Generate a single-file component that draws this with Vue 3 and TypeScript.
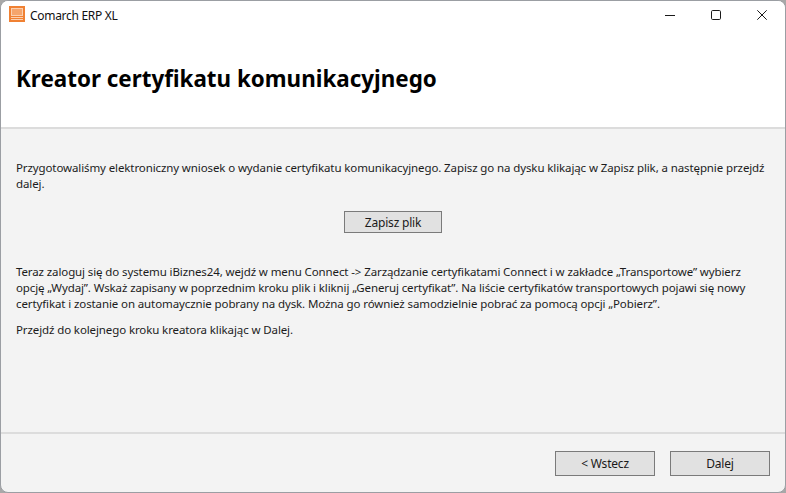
<script setup lang="ts">
const intro: string[] = [
  'Przygotowaliśmy elektroniczny wniosek o wydanie certyfikatu komunikacyjnego. Zapisz go na dysku klikając w Zapisz plik, a następnie przejdź',
  'dalej.',
]
const steps: string[] = [
  'Teraz zaloguj się do systemu iBiznes24, wejdź w menu Connect -> Zarządzanie certyfikatami Connect i w zakładce „Transportowe” wybierz',
  'opcję „Wydaj”. Wskaż zapisany w poprzednim kroku plik i kliknij „Generuj certyfikat”. Na liście certyfikatów transportowych pojawi się nowy',
  'certyfikat i zostanie on automaycznie pobrany na dysk. Można go również samodzielnie pobrać za pomocą opcji „Pobierz”.',
]
</script>

<template>
  <div class="window">
    <div class="titlebar">
      <div class="title-left">
        <svg class="app-icon" width="16" height="16" viewBox="0 0 16 16">
          <rect width="16" height="16" fill="#f08133" />
          <rect x="2.5" y="2.5" width="11" height="7" fill="#f5a56c" stroke="#fbd0b0" stroke-width="1" />
          <path d="M2 11.5h12M2 13.5h12" stroke="#fbd0b0" stroke-width="1" />
        </svg>
        <span class="app-title">Comarch ERP XL</span>
      </div>
      <div class="controls">
        <div class="ctl">
          <svg width="10" height="10" viewBox="0 0 10 10"><path d="M0 5.5h10" stroke="#1a1a1a" stroke-width="1" /></svg>
        </div>
        <div class="ctl">
          <svg width="10" height="10" viewBox="0 0 10 10"><rect x="0.5" y="0.5" width="9" height="9" rx="1.2" fill="none" stroke="#1a1a1a" stroke-width="1" /></svg>
        </div>
        <div class="ctl">
          <svg width="10" height="10" viewBox="0 0 10 10"><path d="M0.3 0.3l9.4 9.4M9.7 0.3L0.3 9.7" stroke="#1a1a1a" stroke-width="1" /></svg>
        </div>
      </div>
    </div>

    <header class="header">
      <h1 class="heading">Kreator certyfikatu komunikacyjnego</h1>
    </header>

    <main class="content">
      <p class="para first">
        <span v-for="line in intro" :key="line" class="line">{{ line }}</span>
      </p>
      <div class="center">
        <button class="btn save">Zapisz plik</button>
      </div>
      <p class="para">
        <span v-for="line in steps" :key="line" class="line">{{ line }}</span>
      </p>
      <p class="para last">Przejdź do kolejnego kroku kreatora klikając w Dalej.</p>
    </main>

    <footer class="footer">
      <button class="btn nav">&lt; Wstecz</button>
      <button class="btn nav">Dalej</button>
    </footer>
  </div>
</template>

<style>
html, body { margin: 0; background: #a8a8a8; overflow: hidden; }
</style>

<style scoped>
.window {
  width: 786px;
  height: 493px;
  box-sizing: border-box;
  display: flex;
  flex-direction: column;
  background: #f3f3f3;
  border: 1px solid #9b9ea3;
  border-radius: 8px;
  overflow: hidden;
  font-family: "Noto Sans", "Open Sans", sans-serif;
  color: #1a1a1a;
}
.titlebar {
  height: 30px;
  flex: none;
  background: #fff;
  display: flex;
  align-items: flex-start;
  justify-content: space-between;
}
.title-left { display: flex; align-items: flex-start; padding: 5px 0 0 8px; gap: 5px; }
.app-icon { display: block; }
.app-title { margin-top: 2px; font-size: 12px; line-height: 16px; letter-spacing: -0.3px; color: #111; }
.controls { display: flex; height: 100%; }
.ctl { width: 46px; height: 28px; display: flex; align-items: center; justify-content: center; }
.header {
  height: 98px;
  flex: none;
  box-sizing: border-box;
  background: #fff;
  border-bottom: 2px solid #dcdcdc;
  padding: 30px 0 0 15px;
}
.heading {
  margin: 0;
  font-size: 22.4px;
  line-height: 36px;
  font-weight: 700;
  color: #000;
}
.content { flex: 1; padding: 31px 15px 0; min-height: 0; }
.para { margin: 0; font-size: 11.5px; letter-spacing: -0.108px; line-height: 16px; color: #1c1c1c; white-space: nowrap; }
.line { display: block; }
.center { display: flex; justify-content: center; margin-top: 19px; margin-bottom: 31px; }
.last { margin-top: 10px; }
.btn {
  box-sizing: border-box;
  font: inherit;
  font-size: 12px;
  letter-spacing: -0.2px;
  color: #1a1a1a;
  background: #e1e1e1;
  border: 1px solid #7a7a7a;
  padding: 0;
}
.save { width: 98px; height: 22px; }
.footer {
  height: 60px;
  flex: none;
  box-sizing: border-box;
  border-top: 2px solid #dcdcdc;
  display: flex;
  justify-content: flex-end;
  gap: 15px;
  padding: 17px 15px 0 0;
}
.nav { width: 100px; height: 25px; }
</style>
